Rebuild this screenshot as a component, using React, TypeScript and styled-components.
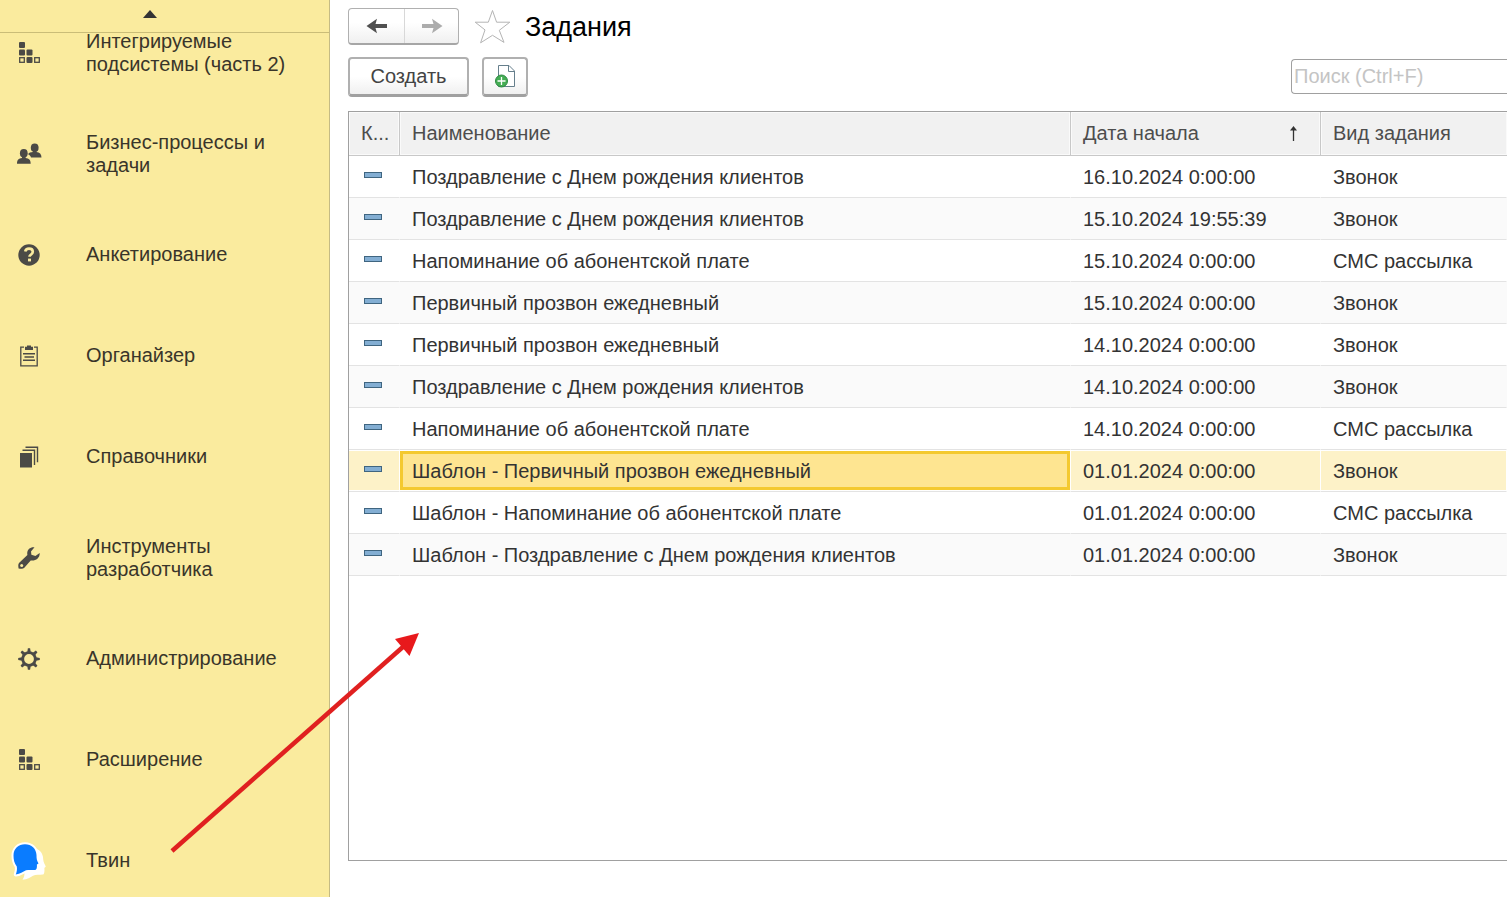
import React from 'react';
import styled, { createGlobalStyle, css } from 'styled-components';

const GlobalStyle = createGlobalStyle`
  *, *::before, *::after { box-sizing: border-box; }
  body {
    margin: 0;
    background: #fff;
    color: #333;
    font-family: "Liberation Sans", Arial, sans-serif;
    font-size: 20px;
    line-height: 23px;
  }
  button, input { font: inherit; color: inherit; }
`;

const Shell = styled.div`
  position: relative;
  display: flex;
  height: 100vh;
  overflow: hidden;
`;

const Sidebar = styled.nav`
  display: flex;
  flex-direction: column;
  flex: 0 0 330px;
  background: #faeb9e;
  border-right: 1px solid #c5bb84;
  overflow: hidden;
`;

const ScrollUp = styled.button`
  display: flex;
  flex: 0 0 33px;
  align-items: center;
  justify-content: center;
  padding: 0 30px 4px 0;
  background: none;
  border: 0;
  border-bottom: 1px solid #cabd78;
`;

const SectionViewport = styled.div`
  flex: 1;
  min-height: 0;
  overflow: hidden;
`;

const SectionList = styled.ul`
  margin: -31px 0 0;
  padding: 0;
  list-style: none;
`;

const SectionLink = styled.a`
  display: flex;
  align-items: center;
  gap: 39px;
  height: 101px;
  padding: 0 28px 0 11px;
  color: #39352a;
  text-decoration: none;
`;

const SectionIcon = styled.span`
  display: flex;
  flex: 0 0 36px;
  align-items: center;
  justify-content: center;
`;

const Workspace = styled.main`
  display: flex;
  flex: 1;
  flex-direction: column;
  min-width: 0;
  padding: 8px 0 36px 18px;
`;

const TitleBar = styled.header`
  display: flex;
  align-items: center;
  height: 37px;
`;

const History = styled.div`
  display: flex;
  height: 37px;
  border: 1px solid #b0b0b0;
  border-bottom: 2px solid #a6a6a6;
  border-radius: 4px;
  background: linear-gradient(#fff 40%, #f0f0f0);
`;

const HistoryButton = styled.button`
  display: flex;
  align-items: center;
  justify-content: center;
  width: 55px;
  padding: 0;
  background: none;
  border: 0;
  & + & {
    width: 54px;
    border-left: 1px solid #d8d8d8;
  }
`;

const FavoriteButton = styled.button`
  display: flex;
  margin: 0 14px 0 15px;
  padding: 0;
  background: none;
  border: 0;
`;

const Title = styled.h1`
  margin: 0;
  color: #000;
  font-size: 27px;
  font-weight: 400;
  line-height: 32px;
`;

const Toolbar = styled.div`
  display: flex;
  align-items: flex-start;
  gap: 13px;
  margin: 12px 0 14px;
`;

const ToolButton = styled.button<{ $width: number }>`
  display: flex;
  align-items: center;
  justify-content: center;
  width: ${(p) => p.$width}px;
  height: 40px;
  padding: 0 0 1px;
  color: #444;
  background: linear-gradient(#fff 50%, #f0f0f0);
  border: 2px solid #b0b0b0;
  border-bottom: 3px solid #a0a0a0;
  border-radius: 4px;
`;

const SearchInput = styled.input`
  width: 216px;
  height: 35px;
  margin: 2px 0 0 auto;
  padding: 0 2px;
  background: #fff;
  border: 1px solid #a0a0a0;
  border-right: 0;
  border-radius: 4px 0 0 4px;
  outline: 0;
  &::placeholder { color: #c4c4c4; opacity: 1; }
`;

const TableFrame = styled.section`
  flex: 1;
  min-height: 0;
  border: 1px solid #a0a0a0;
  border-right: 0;
  overflow: hidden;
`;

const Table = styled.table`
  width: 100%;
  table-layout: fixed;
  border-collapse: separate;
  border-spacing: 0;
`;

const Column = styled.col<{ $width?: number }>`
  width: ${(p) => (p.$width ? `${p.$width}px` : 'auto')};
`;

const HeadCell = styled.th`
  height: 44px;
  padding: 0 0 0 12px;
  color: #4d4d4d;
  font-weight: 400;
  text-align: left;
  white-space: nowrap;
  background: #f1f1f1;
  border-right: 1px solid #c8c8c8;
  border-bottom: 1px solid #c8c8c8;
  box-shadow: inset 0 0 0 1px #fafafa;
  &:last-child { border-right: 0; }
`;

const SortLabel = styled.span`
  display: flex;
  align-items: center;
  justify-content: space-between;
  padding-right: 21px;
`;

const Cell = styled.td<{ $active?: boolean }>`
  height: 42px;
  padding: 2px 0 0 12px;
  white-space: nowrap;
  border-right: 1px solid transparent;
  border-bottom: 1px solid #e3e3e3;
  ${(p) =>
    p.$active &&
    css`
      && {
        background: #fee591;
        box-shadow: inset 0 1px #fff, inset 0 -1px #fff, inset 0 0 0 3px #f4c92f,
          inset 0 4px #f4c92f, inset 0 -4px #f4c92f;
      }
    `}
`;

const MarkCell = styled(Cell)`
  padding: 0 0 4px 15px;
`;

const Row = styled.tr<{ $selected?: boolean }>`
  &:nth-child(even) > td { background: #fafafa; }
  ${(p) =>
    p.$selected &&
    css`
      & > td {
        border-right-color: #fff;
        box-shadow: inset 0 1px #fff, inset 0 -1px #fff;
      }
      &:nth-child(n) > td { background: #fdf2c8; }
      &:nth-child(n) > td${Cell}:nth-child(2) { background: #fee591; }
    `}
`;

const Pointer = styled.svg`
  position: absolute;
  left: 170px;
  top: 630px;
  pointer-events: none;
`;

const Mark = styled.svg`
  display: block;
`;

const INK = '#4b4a46';

const BlocksIcon = () => (
  <svg width="22" height="22" viewBox="0 0 22 22" fill={INK} aria-hidden="true">
    <rect x="1" y="0" width="6" height="6" rx="1" />
    <rect x="1" y="7.5" width="6" height="6" rx="1" />
    <rect x="8.5" y="7.5" width="6" height="6" rx="1" />
    <rect x="8.5" y="15" width="6" height="6" rx="1" />
    <g fill="none" stroke={INK} strokeWidth="1.3">
      <rect x="1.7" y="15.7" width="4.6" height="4.6" />
      <rect x="16.7" y="15.7" width="4.6" height="4.6" />
    </g>
  </svg>
);

const PeopleIcon = () => (
  <svg width="26" height="22" viewBox="0 0 26 22" fill={INK} aria-hidden="true">
    <ellipse cx="18.700" cy="4.700" rx="3.900" ry="4.300" />
    <path d="M17 7.500h3.400v1.600c3.200.3 5.100 2 5.100 5.400H15c-.6-1.600-1.500-2.600-3-3.200.9-1.400 2.600-2.100 5-2.200z" />
    <ellipse cx="7.800" cy="10.200" rx="3.900" ry="4.300" />
    <path d="M6 13h3.600v2c3.300.3 5.100 2 5.100 5.800H1c0-3.800 1.700-5.500 5-5.800z" />
  </svg>
);

const QuestionIcon = () => (
  <svg width="22" height="22" viewBox="0 0 22 22" aria-hidden="true">
    <circle cx="11" cy="11" r="10.700" fill={INK} />
    <path d="M7.200 7.600C7.600 5.400 9 4.600 11 4.600c2.200 0 3.800 1.100 3.800 3.100 0 2.700-3.300 2.700-3.300 5.100" fill="none" stroke="#faeb9e" strokeWidth="2.600" />
    <rect x="10" y="14.600" width="3" height="2.800" fill="#faeb9e" />
  </svg>
);

const ClipboardIcon = () => (
  <svg width="20" height="22" viewBox="0 0 20 22" aria-hidden="true">
    <path d="M5 2.100H1.800v18.700h16.400V2.100H15" fill="none" stroke={INK} strokeWidth="1.300" />
    <path d="M6 5V1.800h2V.5h4v1.300h2V5z" fill={INK} />
    <path d="M4 8.700h12M5.500 12h9.500M4 15.300h12" stroke={INK} strokeWidth="1.500" />
  </svg>
);

const BooksIcon = () => (
  <svg width="20" height="22" viewBox="0 0 20 22" aria-hidden="true">
    <rect x="1" y="7" width="12" height="14.500" fill={INK} />
    <path d="M3.500 4.300h12V19M6.500 1.300h12v15" fill="none" stroke={INK} strokeWidth="1.400" />
  </svg>
);

const WrenchIcon = () => (
  <svg width="22" height="22" viewBox="0 0 22 22" aria-hidden="true">
    <path d="M16.500.3C12.500-.4 8.300 2.600 9.400 7.900L1 15.900c-1 1.100-.8 3.600-.4 5.600 2 .4 4.400.5 5.500-.5l6.600-7.600c4.600.9 9.300-2.300 9-7.400l-4.300 3.100-4-1.400-.4-3.300z" fill={INK} />
    <circle cx="3.700" cy="18.400" r="1.500" fill="#faeb9e" />
  </svg>
);

const GearIcon = () => (
  <svg width="22" height="22" viewBox="-11 -11 22 22" aria-hidden="true">
    <circle r="6.300" fill="none" stroke={INK} strokeWidth="2.800" />
    {[0, 45, 90, 135, 180, 225, 270, 315].map((angle) => (
      <path key={angle} d="M-1.700-7-1.100-10.800h2.200L1.700-7z" fill={INK} transform={`rotate(${angle})`} />
    ))}
  </svg>
);

const TwinIcon = () => (
  <svg width="36" height="40" viewBox="0 0 36 40" aria-hidden="true">
    <path d="M20 6.500c6.500.5 11 3.500 12 9.500.2 3.600.6 5.700 2.700 9.200.2 1-1 1.200-1.300 1.700.2 3.500.1 6.200-1.700 6.700-3.200.4-7 0-9.700 1.200-2.700 1.700-5.500 3.600-10.500 3.900 1.500-2.500 2-4 2-6.700z" fill="#fff" />
    <path
      d="M14 3.300c6.500 0 11.300 4.500 11.500 10.700 0 3.700.3 5.300 1.900 8.200.1.900-1.200.9-1.500 1.400.2 2.800-.1 5.100-1.600 5.300-3 .3-6.300-.2-9.300.4-3.200 1.500-5.700 3.700-10.200 4.200 1-2.700 1.500-5 1-8C3.400 22.500 2.500 18.500 2.500 14.500 2.500 7.800 7.500 3.300 14 3.300z"
      fill="#0a7cff"
      stroke="#fff"
      strokeWidth="4"
      strokeLinejoin="round"
      paintOrder="stroke"
    />
  </svg>
);

const BackArrow = () => (
  <svg width="22" height="16" viewBox="0 0 22 16" fill="#505050" aria-hidden="true">
    <path d="M.5 8 11 .8 9.500 6H21v4H9.500l1.500 5.200z" />
  </svg>
);

const ForwardArrow = () => (
  <svg width="22" height="16" viewBox="0 0 22 16" fill="#acacac" aria-hidden="true">
    <path d="M21.500 8 11 .8 12.500 6H1v4h11.500L11 15.200z" />
  </svg>
);

const StarIcon = () => (
  <svg width="37" height="35" viewBox="0 0 37 35" aria-hidden="true">
    <path d="M18.500 1.500 22.600 13.200H35.800L25.300 21.300 30 33.400 18.500 26.300 6.600 33.800 11 20.900 1.200 13.200H14.300z" fill="#fff" stroke="#b4b4b4" />
  </svg>
);

const CopyIcon = () => (
  <svg width="22" height="24" viewBox="0 0 22 24" aria-hidden="true">
    <path d="M4.500 1.500H15L20.500 7v15.500h-16z" fill="#fff" stroke="#667f8c" />
    <path d="M14.500 1.500V7.500h6" fill="none" stroke="#667f8c" />
    <circle cx="7.500" cy="17" r="6" fill="#45ad54" stroke="#2c8a43" />
    <path d="M7.500 13v8M3.500 17h8" stroke="#fff" strokeWidth="1.300" />
  </svg>
);

const SECTIONS = [
  { label: 'Интегрируемые подсистемы (часть 2)', Icon: BlocksIcon },
  { label: 'Бизнес-процессы и задачи', Icon: PeopleIcon },
  { label: 'Анкетирование', Icon: QuestionIcon },
  { label: 'Органайзер', Icon: ClipboardIcon },
  { label: 'Справочники', Icon: BooksIcon },
  { label: 'Инструменты разработчика', Icon: WrenchIcon },
  { label: 'Администрирование', Icon: GearIcon },
  { label: 'Расширение', Icon: BlocksIcon },
  { label: 'Твин', Icon: TwinIcon },
];

const TASKS = [
  { name: 'Поздравление с Днем рождения клиентов', date: '16.10.2024 0:00:00', kind: 'Звонок' },
  { name: 'Поздравление с Днем рождения клиентов', date: '15.10.2024 19:55:39', kind: 'Звонок' },
  { name: 'Напоминание об абонентской плате', date: '15.10.2024 0:00:00', kind: 'СМС рассылка' },
  { name: 'Первичный прозвон ежедневный', date: '15.10.2024 0:00:00', kind: 'Звонок' },
  { name: 'Первичный прозвон ежедневный', date: '14.10.2024 0:00:00', kind: 'Звонок' },
  { name: 'Поздравление с Днем рождения клиентов', date: '14.10.2024 0:00:00', kind: 'Звонок' },
  { name: 'Напоминание об абонентской плате', date: '14.10.2024 0:00:00', kind: 'СМС рассылка' },
  { name: 'Шаблон - Первичный прозвон ежедневный', date: '01.01.2024 0:00:00', kind: 'Звонок', selected: true },
  { name: 'Шаблон - Напоминание об абонентской плате', date: '01.01.2024 0:00:00', kind: 'СМС рассылка' },
  { name: 'Шаблон - Поздравление с Днем рождения клиентов', date: '01.01.2024 0:00:00', kind: 'Звонок' },
];

export default function App() {
  return (
    <>
      <GlobalStyle />
      <Shell>
        <Sidebar>
          <ScrollUp type="button" aria-label="Прокрутить вверх">
            <svg width="14" height="8" viewBox="0 0 14 8" aria-hidden="true">
              <path d="M7 0 14 8H0z" fill="#333" />
            </svg>
          </ScrollUp>
          <SectionViewport>
            <SectionList>
              {SECTIONS.map(({ label, Icon }) => (
                <li key={label}>
                  <SectionLink href="#">
                    <SectionIcon><Icon /></SectionIcon>
                    <span>{label}</span>
                  </SectionLink>
                </li>
              ))}
            </SectionList>
          </SectionViewport>
        </Sidebar>

        <Workspace>
          <TitleBar>
            <History>
              <HistoryButton type="button" aria-label="Назад"><BackArrow /></HistoryButton>
              <HistoryButton type="button" aria-label="Вперед"><ForwardArrow /></HistoryButton>
            </History>
            <FavoriteButton type="button" aria-label="В избранное"><StarIcon /></FavoriteButton>
            <Title>Задания</Title>
          </TitleBar>

          <Toolbar>
            <ToolButton type="button" $width={121}>Создать</ToolButton>
            <ToolButton type="button" $width={46} aria-label="Скопировать"><CopyIcon /></ToolButton>
            <SearchInput type="text" placeholder="Поиск (Ctrl+F)" aria-label="Поиск" />
          </Toolbar>

          <TableFrame>
            <Table>
              <colgroup>
                <Column $width={51} />
                <Column />
                <Column $width={250} />
                <Column $width={186} />
              </colgroup>
              <thead>
                <tr>
                  <HeadCell scope="col">К...</HeadCell>
                  <HeadCell scope="col">Наименование</HeadCell>
                  <HeadCell scope="col" aria-sort="ascending">
                    <SortLabel>
                      Дата начала
                      <svg width="10" height="16" viewBox="0 0 10 16" aria-hidden="true">
                        <path d="M4.500 15V2" stroke="#333" strokeWidth="1.300" />
                        <path d="M4.500 0 8 4.500H1z" fill="#333" />
                      </svg>
                    </SortLabel>
                  </HeadCell>
                  <HeadCell scope="col">Вид задания</HeadCell>
                </tr>
              </thead>
              <tbody>
                {TASKS.map((task, index) => (
                  <Row key={index} $selected={task.selected}>
                    <MarkCell>
                      <Mark width="18" height="6" viewBox="0 0 18 6" aria-hidden="true">
                        <rect x=".5" y=".5" width="17" height="5" fill="#83aed3" stroke="#3f6580" />
                      </Mark>
                    </MarkCell>
                    <Cell $active={task.selected}>{task.name}</Cell>
                    <Cell>{task.date}</Cell>
                    <Cell>{task.kind}</Cell>
                  </Row>
                ))}
              </tbody>
            </Table>
          </TableFrame>
        </Workspace>

        <Pointer width="252" height="226" viewBox="0 0 252 226" aria-hidden="true">
          <path d="M2 221 234 16" stroke="#e02020" strokeWidth="4.500" />
          <path d="M249 3 225 9 239.500 26z" fill="#e8191c" />
        </Pointer>
      </Shell>
    </>
  );
}
